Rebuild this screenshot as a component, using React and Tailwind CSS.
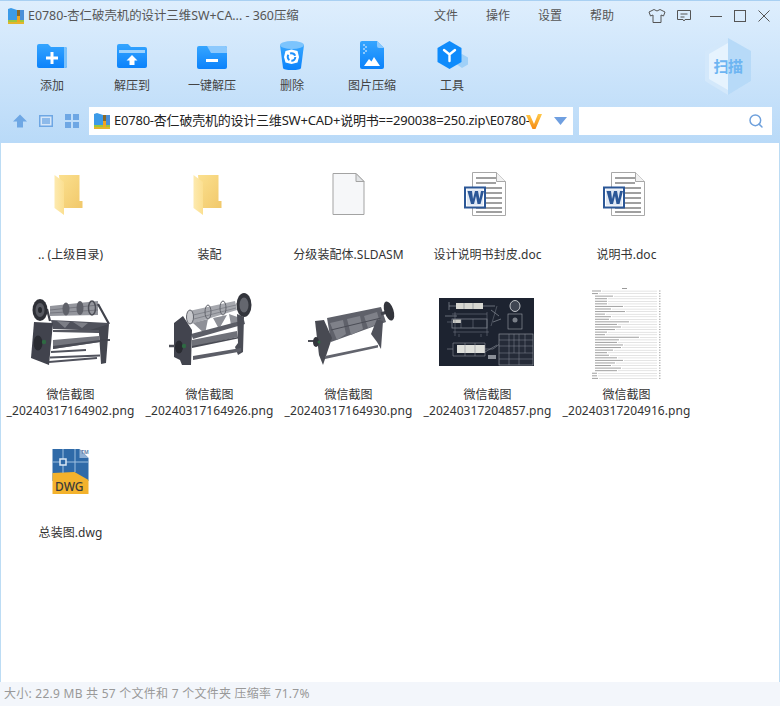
import { Search } from "lucide-react";

const toolbarItems = [
  { label: "添加", icon: AddIcon },
  { label: "解压到", icon: ExtractIcon },
  { label: "一键解压", icon: OneClickIcon },
  { label: "删除", icon: TrashIcon },
  { label: "图片压缩", icon: ImageIcon },
  { label: "工具", icon: ToolsIcon },
];

const menuItems = ["文件", "操作", "设置", "帮助"];

const files = [
  { lines: [".. (上级目录)"], icon: FolderIcon },
  { lines: ["装配"], icon: FolderIcon },
  { lines: ["分级装配体.SLDASM"], icon: BlankFileIcon },
  { lines: ["设计说明书封皮.doc"], icon: WordIcon },
  { lines: ["说明书.doc"], icon: WordIcon },
  { lines: ["微信截图", "_20240317164902.png"], icon: MachineFront },
  { lines: ["微信截图", "_20240317164926.png"], icon: MachineAngle },
  { lines: ["微信截图", "_20240317164930.png"], icon: MachineTop },
  { lines: ["微信截图", "_20240317204857.png"], icon: CadSheet },
  { lines: ["微信截图", "_20240317204916.png"], icon: TocPage },
  { lines: ["总装图.dwg"], icon: DwgIcon },
];

// widths of the contents-page entries, top to bottom
const tocEntries = [
  9, 6, 18, 12, 12, 12, 28, 16, 30, 10, 16, 14, 34, 22, 26, 20, 12, 10, 44, 24, 22, 28, 26, 18, 12, 14,
  22, 28, 20, 16, 26, 22, 5, 5, 6,
];

function AddIcon() {
  return (
    <svg width="32" height="32" viewBox="0 0 32 32">
      <defs>
        <linearGradient id="blueA" x1="0" y1="0" x2="0" y2="1">
          <stop offset="0" stopColor="#35a5ff" />
          <stop offset="1" stopColor="#0b82fb" />
        </linearGradient>
      </defs>
      <path d="M1 6a2 2 0 0 1 2-2h9l3 3h14a2 2 0 0 1 2 2v17a2 2 0 0 1-2 2H3a2 2 0 0 1-2-2z" fill="url(#blueA)" />
      <path d="M28 7h1a2 2 0 0 1 2 2v17a2 2 0 0 1-2 2h-1z" fill="#7cc2fb" />
      <path d="M14.500 12h3v4.500h4.500v3h-4.500v4.500h-3v-4.500H10v-3h4.500z" fill="#fff" />
    </svg>
  );
}

function ExtractIcon() {
  return (
    <svg width="32" height="32" viewBox="0 0 32 32">
      <defs>
        <linearGradient id="blueB" x1="0" y1="0" x2="0" y2="1">
          <stop offset="0" stopColor="#35a5ff" />
          <stop offset="1" stopColor="#0b82fb" />
        </linearGradient>
      </defs>
      <path d="M1 6a2 2 0 0 1 2-2h9l3 3h14a2 2 0 0 1 2 2v17a2 2 0 0 1-2 2H3a2 2 0 0 1-2-2z" fill="url(#blueB)" />
      <rect x="3" y="10" width="26" height="3" fill="#9dd2fd" />
      <path d="M16 15l5.500 5.500H18.500V25h-5v-4.500h-3z" fill="#fff" />
    </svg>
  );
}

function OneClickIcon() {
  return (
    <svg width="32" height="32" viewBox="0 0 32 32">
      <defs>
        <linearGradient id="blueC" x1="0" y1="0" x2="0" y2="1">
          <stop offset="0" stopColor="#35a5ff" />
          <stop offset="1" stopColor="#0b82fb" />
        </linearGradient>
      </defs>
      <rect x="1" y="6" width="30" height="23" rx="2" fill="url(#blueC)" />
      <path d="M11 6h18a2 2 0 0 1 2 2v5H15z" fill="#8cc9fd" />
      <rect x="10" y="19" width="12" height="3" fill="#fff" />
    </svg>
  );
}

function TrashIcon() {
  return (
    <svg width="32" height="32" viewBox="0 0 32 32">
      <defs>
        <linearGradient id="blueD" x1="0" y1="0" x2="0" y2="1">
          <stop offset="0" stopColor="#36a6ff" />
          <stop offset="1" stopColor="#0b82fb" />
        </linearGradient>
      </defs>
      <path d="M4 5l3 23q.5 2 9 2t9-2l3-23z" fill="url(#blueD)" />
      <ellipse cx="16" cy="5" rx="12" ry="4" fill="#7cc4fd" />
      <path d="M15.500 9.500l6 1.500 1.500 6-1.500 5.500-6 1.500-6-1.500L8 17l1.500-6z" fill="#fff" />
      <circle cx="15.500" cy="17" r="3.800" fill="none" stroke="#1e90fb" strokeWidth="2" strokeDasharray="6 2" />
    </svg>
  );
}

function ImageIcon() {
  return (
    <svg width="32" height="32" viewBox="0 0 32 32">
      <defs>
        <linearGradient id="blueE" x1="0" y1="0" x2="0" y2="1">
          <stop offset="0" stopColor="#35a5ff" />
          <stop offset="1" stopColor="#0b82fb" />
        </linearGradient>
      </defs>
      <path d="M4 3a2 2 0 0 1 2-2h15l7 7v19a2 2 0 0 1-2 2H6a2 2 0 0 1-2-2z" fill="url(#blueE)" />
      <path d="M21 1l7 7h-5a2 2 0 0 1-2-2z" fill="#8cc9fd" />
      <path d="M7 4h2v2H7zM9 6h2v2H9zM7 8h2v2H7zM9 10h2v2H9zM7 12h2v2H7z" fill="#8cc9fd" />
      <path d="M8 26l5-7 2.500 2.500L18 17l6 9z" fill="#fff" />
    </svg>
  );
}

function ToolsIcon() {
  return (
    <svg width="32" height="32" viewBox="0 0 32 32">
      <path d="M26 14l6 3.500v7L26 28l-5-3.500v-7z" fill="#9fd0f8" />
      <path d="M13.500 1l12 7v14l-12 7-12-7V8z" fill="#0f8bfb" />
      <path d="M8 10l5.500 4.500L19 10M13.500 14.500V21" fill="none" stroke="#fff" strokeWidth="2.400" strokeLinecap="round" />
    </svg>
  );
}

function ZipIcon() {
  return (
    <svg width="16" height="16" viewBox="0 0 16 16" className="shrink-0">
      <path d="M0 1l3-1 6 2v11H0z" fill="#3c9be8" />
      <rect x="9" y="2" width="3" height="11" fill="#8a6a2a" />
      <rect x="12" y="2" width="4" height="11" fill="#4a8fd8" />
      <rect x="0" y="12" width="16" height="2" fill="#9fc63c" />
      <rect x="0" y="14" width="16" height="2" fill="#e4b52c" />
      <rect x="9" y="8" width="3" height="6" fill="#f1a51f" />
    </svg>
  );
}

function VipMark() {
  return (
    <svg width="16" height="15" viewBox="0 0 16 15" className="shrink-0">
      <defs>
        <linearGradient id="vipV" x1="0" y1="0" x2="0" y2="1">
          <stop offset="0" stopColor="#ffc94a" />
          <stop offset="1" stopColor="#f58a12" />
        </linearGradient>
      </defs>
      <path d="M0 1h4l4 9 4-10h4L9.500 15h-3z" fill="url(#vipV)" />
    </svg>
  );
}

function FolderIcon() {
  return (
    <svg width="48" height="48" viewBox="0 0 48 48">
      <defs>
        <linearGradient id="folderBack" x1="0" y1="0" x2="1" y2="1">
          <stop offset="0" stopColor="#fbe08f" />
          <stop offset="1" stopColor="#f1c86a" />
        </linearGradient>
        <linearGradient id="folderFlap" x1="0" y1="0" x2="1" y2="0">
          <stop offset="0" stopColor="#fdeab0" />
          <stop offset="1" stopColor="#fbdf90" />
        </linearGradient>
      </defs>
      <path d="M12 4h20.500v26h3v7H15z" fill="url(#folderBack)" />
      <path d="M7.500 4l9.500 7v33l-9.500-7z" fill="url(#folderFlap)" />
    </svg>
  );
}

function BlankFileIcon() {
  return (
    <svg width="48" height="48" viewBox="0 0 48 48">
      <path d="M8 2.500h23l8 8v33H8z" fill="#f6f7f9" stroke="#a3a3a3" />
      <path d="M31 2.500v8h8z" fill="#e2e4e6" stroke="#a3a3a3" />
    </svg>
  );
}

function WordIcon() {
  return (
    <svg width="48" height="48" viewBox="0 0 48 48">
      <path d="M8.500 1.500h24l9 9v34h-33z" fill="#fff" stroke="#a8a8a8" />
      <path d="M32.500 1.500v9h9" fill="#f1f1f1" stroke="#a8a8a8" />
      <path d="M12 7h20M12 12h20M12 17h26M21 22h17M21 27h17M21 32h17M12 37h26M12 41h26" stroke="#a0a0a0" strokeWidth="2" />
      <rect x="1" y="16.500" width="20" height="20" fill="#fff" stroke="#2b5797" strokeWidth="2" />
      <rect x="3" y="18.500" width="16" height="16" fill="#dfe8f4" />
      <path d="M3.500 20h4.500l1 8 2-8h3l1.500 8 1.500-8h3l-3.500 13h-3l-1.500-8-2 8h-3z" fill="#2b5797" />
    </svg>
  );
}

function DwgIcon() {
  return (
    <svg width="48" height="48" viewBox="0 0 48 48">
      <path d="M5.500 0h27l9 9v23H5.500z" fill="#2f6aa8" />
      <path d="M32.500 0l9 9h-9z" fill="#8fb0d4" />
      <path d="M5.500 24l22-1 14 8v14h-36z" fill="#f3b22c" />
      <path d="M5.500 13h36M16 0v24M28 0v23" stroke="#9fc0e0" strokeWidth="1" fill="none" />
      <rect x="13" y="10" width="6" height="6" fill="#2f6aa8" stroke="#dbe8f4" strokeWidth="1.500" />
      <text x="8" y="42" fontSize="12" fontWeight="500" fill="#3a3a3a" fontFamily="'Noto Sans', sans-serif">
        DWG
      </text>
      <text x="34" y="5" fontSize="5" fontWeight="700" fill="#5f7fa8" fontFamily="'Noto Sans', sans-serif">
        TM
      </text>
    </svg>
  );
}

function MachineFront() {
  return (
    <svg width="100" height="92" viewBox="0 0 100 92" className="blur-[0.5px]">
      <g transform="translate(0 2)">
        <path d="M29 16l48-5v14l-48 1z" fill="#94969d" />
        <path d="M29 20l48-5M29 23l48-3" stroke="#6d6f77" strokeWidth="0.800" />
        <ellipse cx="45" cy="19" rx="3.500" ry="6.500" fill="#5f6169" />
        <ellipse cx="59" cy="18" rx="3.500" ry="7" fill="#5f6169" />
        <ellipse cx="71" cy="18" rx="3.500" ry="7" fill="none" stroke="#4d4f57" strokeWidth="1.500" />
        <path d="M77 14l11 20M26 19l3 12" stroke="#41434c" strokeWidth="2.200" fill="none" />
        <ellipse cx="19" cy="20" rx="7.500" ry="11" fill="#2e3037" />
        <ellipse cx="19" cy="20" rx="4.500" ry="7" fill="#585a62" />
        <ellipse cx="19" cy="20" rx="2" ry="3" fill="#26282e" />
        <path d="M30 30l58 3-3 8-53-2z" fill="#4f515b" />
        <path d="M36 31l13 1-5 6zM52 32l15 1-6 5z" fill="#7c7e86" />
        <path d="M13 32l19 1-4 42-18-7z" fill="#41434d" />
        <path d="M66 41l22-7-3 39-5 1-2-31z" fill="#44464f" />
        <path d="M32 40h46v3l-46-1z" fill="#54565f" />
        <path d="M32 50l46-4 1 6-47 7z" fill="#74767e" />
        <path d="M32 56l47-6v2L32 59z" fill="#4a4c55" />
        <path d="M79 50h10" stroke="#41434c" strokeWidth="1.800" />
        <ellipse cx="17" cy="53" rx="4.500" ry="7.500" fill="#282a30" />
        <circle cx="23" cy="52" r="2.200" fill="#2f6a43" />
        <path d="M30 62l35-2M29 67.500l50-2M28 72l48-4" stroke="#50525c" strokeWidth="2.200" />
      </g>
    </svg>
  );
}

function MachineAngle() {
  return (
    <svg width="100" height="92" viewBox="0 0 100 92" className="blur-[0.5px]">
      <g transform="translate(-1 -3)">
        <path d="M30 26l46-10 2 9-46 14z" fill="#a6a8ae" />
        <path d="M30 31l47-11M31 35l46-12" stroke="#7a7c84" strokeWidth="0.800" />
        <ellipse cx="31" cy="32" rx="3.500" ry="7" fill="#c8c9cd" stroke="#62646c" />
        <ellipse cx="49" cy="27" rx="3" ry="7" fill="none" stroke="#62646c" />
        <ellipse cx="64" cy="23" rx="3" ry="7" fill="none" stroke="#62646c" />
        <path d="M78 20l7-3" stroke="#4d4f57" strokeWidth="3" />
        <ellipse cx="85" cy="20" rx="7.500" ry="12" fill="#33353c" />
        <ellipse cx="85" cy="20" rx="4.500" ry="7.500" fill="#64666e" />
        <path d="M34 38l15-4-3 15zM54 33l14-3-8 14zM70 29l14 5-12 6z" fill="#8e9097" />
        <path d="M32 49l53-14 1 4-52 15z" fill="#5c5e67" />
        <path d="M15 38l9-7 9 14-1 35h-9l-2-5-6-3z" fill="#42444e" />
        <path d="M78 29l7 3-1 35-5 3-3-8 3-4z" fill="#4b4d56" />
        <path d="M33 55l45-9 1 6-46 10z" fill="#6f7179" />
        <path d="M33 61l46-9v1.500L33 63z" fill="#4a4c55" />
        <path d="M34 71l48-8v3.500l-48 8.500z" fill="#5c5e67" />
        <path d="M10 61h8" stroke="#4d4f57" strokeWidth="2.500" />
        <ellipse cx="20" cy="62" rx="4" ry="6.500" fill="#282a30" />
        <circle cx="25" cy="61" r="2.200" fill="#2f6a43" />
      </g>
    </svg>
  );
}

function MachineTop() {
  return (
    <svg width="100" height="92" viewBox="0 0 100 92" className="blur-[0.5px]">
      <g transform="translate(2 2)">
        <path d="M26 28l54-11 5 15-55 20z" fill="#5f616a" />
        <path d="M29 33l13-3 3 14-9 6zM46 29l13-3 3 13-12 6zM63 26l13-4 3 11-12 5z" fill="#7f8189" />
        <path d="M30 40l50-12" stroke="#4a4c55" strokeWidth="1" />
        <path d="M14 31l9-1 8 18-9 27-4-10z" fill="#484a52" />
        <path d="M76 29l6 2-2 28-4-7-6-8z" fill="#50525b" />
        <path d="M24 66l53-11v2.500l-53 11.500z" fill="#62646d" />
        <path d="M80 24l6-2" stroke="#41434c" strokeWidth="3" />
        <ellipse cx="88" cy="21" rx="4.500" ry="10" fill="#33353c" transform="rotate(-18 88 21)" />
        <path d="M7 51h8" stroke="#4d4f57" strokeWidth="2" />
        <ellipse cx="15" cy="52" rx="3" ry="5" fill="#33353c" />
        <circle cx="18" cy="52" r="1.500" fill="#2f6a43" />
      </g>
    </svg>
  );
}

function CadSheet() {
  return (
    <svg width="105" height="92" viewBox="0 0 105 92" className="blur-[0.3px]">
      <g transform="translate(0 4)">
        <rect x="4" y="6" width="95" height="68" fill="#1d2330" />
        <rect x="21" y="11" width="27" height="6" fill="#d8d8d2" />
        <path d="M29 11v6M38 11v6M14 14h7M48 14h12M14 10v8M10 24h12M56 18l8 6M58 30l8-3" stroke="#8a8f98" strokeWidth="0.700" />
        <rect x="17" y="27" width="35" height="9" fill="none" stroke="#8a8f98" strokeWidth="0.700" />
        <rect x="18" y="27.500" width="8" height="3.500" fill="#c9c9c4" />
        <path d="M26 27v9M38 27v9M17 22h35M18 40h36M20 20v24M52 20v24M62 14l-6 20M24 42v3M46 42v3M12 30h6" stroke="#7d828c" strokeWidth="0.500" />
        <ellipse cx="80" cy="14" rx="5" ry="5.500" fill="#3f4552" stroke="#bfc2c7" strokeWidth="1" />
        <rect x="73" y="22" width="14" height="15" fill="none" stroke="#9ca0a8" strokeWidth="0.600" />
        <circle cx="80" cy="28" r="2.500" fill="#7a7f88" />
        <rect x="22" y="53" width="28" height="8" fill="#dedfda" />
        <path d="M18 51h32v13H18zM30 51v13M40 51v13M12 57h6M50 57h8l8-6M50 60l12-7" stroke="#8a8f98" strokeWidth="0.600" fill="none" />
        <rect x="53" y="63" width="8" height="4" fill="#8a8f98" />
        <rect x="64" y="42" width="34" height="31" fill="#252b38" stroke="#9ca0a8" strokeWidth="0.600" />
        <path d="M64 61h34M74 42v31M84 42v31M90 42v19M64 48h34M64 54h34M64 67h34M79 42v19" stroke="#868b94" strokeWidth="0.500" />
      </g>
    </svg>
  );
}

function TocPage() {
  return (
    <svg width="74" height="92" viewBox="0 0 74 92" className="blur-[0.2px]">
      <rect x="32" y="0" width="5" height="1" fill="#9a9a9a" />
      {tocEntries.map((w, i) => {
        const y = 2.500 + i * 2.570;
        const indent = w > 8 && i > 1 ? 3 : 0;
        return (
          <g key={i}>
            <rect x={2 + indent} y={y} width={w} height="1" fill="#a0a0a0" />
            <rect x={3 + indent + w} y={y + 0.300} width={67 - (3 + indent + w)} height="0.600" fill="#d2d2d2" />
            <rect x="69" y={y} width="1.500" height="1" fill="#a9a9a9" />
          </g>
        );
      })}
    </svg>
  );
}

function FileCell({ lines, icon: Icon }) {
  return (
    <div className="flex h-[139px] flex-col items-center">
      <div className="flex h-[92px] w-full items-center justify-center">
        <Icon />
      </div>
      <div
        className={`text-center text-[12px] leading-[16px] tracking-[0.05px] whitespace-nowrap text-[#333] ${
          lines.length > 1 ? "mt-[7px]" : "mt-[6px]"
        }`}
      >
        {lines.map((line) => (
          <div key={line}>{line}</div>
        ))}
      </div>
    </div>
  );
}

export default function App() {
  return (
    <div className="flex h-[706px] w-[780px] flex-col overflow-hidden bg-white font-['Noto_Sans','Noto_Sans_CJK_SC',sans-serif]">
      <header className="flex h-[143px] shrink-0 flex-col border-t border-[#a9d0f2] bg-gradient-to-b from-[#deeefd] to-[#b9daf8]">
        {/* title bar */}
        <div className="flex h-[30px] items-center pl-[8px] text-[#555]">
          <ZipIcon />
          <span className="ml-[4px] text-[12.4px]">E0780-杏仁破壳机的设计三维SW+CA... - 360压缩</span>
          <nav className="ml-auto flex text-[12px]">
            {menuItems.map((item) => (
              <span key={item} className="w-[52px] text-center">
                {item}
              </span>
            ))}
          </nav>
          <div className="mr-[9px] ml-[20px] flex items-center text-[#555]">
            <svg width="18" height="16" viewBox="0 0 18 16" fill="none" stroke="currentColor">
              <path d="M6 1.500L1 4l1.500 4L5 7v7.500h8V7l2.500 1L17 4l-5-2.500q-3 3-6 0z" />
            </svg>
            <svg width="16" height="14" viewBox="0 0 16 14" fill="none" stroke="currentColor" className="ml-[10px]">
              <path d="M1.500 1.500h13v9H9l-1 1.500-1-1.500H1.500zM4.500 5h7M4.500 8h4" />
            </svg>
            <svg width="14" height="14" viewBox="0 0 14 14" stroke="currentColor" className="ml-[17px]">
              <path d="M1 7.500h12" />
            </svg>
            <svg width="14" height="14" viewBox="0 0 14 14" fill="none" stroke="currentColor" className="ml-[10px]">
              <rect x="1.500" y="1.500" width="11" height="11" />
            </svg>
            <svg width="14" height="14" viewBox="0 0 14 14" stroke="currentColor" className="ml-[10px]">
              <path d="M1.500 1.500l11 11M12.500 1.500l-11 11" />
            </svg>
          </div>
        </div>

        {/* toolbar */}
        <div className="flex h-[76px] items-start pt-[7px] pl-[12px]">
          {toolbarItems.map(({ label, icon: Icon }) => (
            <button key={label} className="mt-[2px] flex w-[80px] flex-col items-center text-[12px] leading-[16px] text-[#444]">
              <Icon />
              <span className="mt-[6px]">{label}</span>
            </button>
          ))}
          <div className="relative ml-auto mr-[29px] flex h-[57px] w-[46px] items-center justify-center">
            <svg width="46" height="57" viewBox="0 0 46 57" className="absolute inset-0">
              <path d="M23 0l23 13v30L23 57 0 43V13z" fill="#d3e8fb" />
              <path d="M23 0l23 13v30L23 57z" fill="#b7daf8" />
              <path d="M23 5L4 16v25l19 11z" fill="#e6f3fe" />
            </svg>
            <span className="relative text-[15px] font-bold tracking-[-0.5px] text-[#6db5f2]">扫描</span>
          </div>
        </div>

        {/* address row */}
        <div className="flex h-[28px] items-center pr-[8px] pl-[13px]">
          <svg width="14" height="14" viewBox="0 0 14 14" fill="#6ea7e4">
            <path d="M7 0.500l7 7H10v6H4v-6H0z" />
          </svg>
          <svg width="14" height="12" viewBox="0 0 14 12" fill="none" className="ml-[12px]">
            <rect x="0.750" y="0.750" width="12.500" height="10.500" stroke="#6ea7e4" strokeWidth="1.500" fill="#d5e6f8" />
            <rect x="3" y="3" width="8" height="6" fill="#8dbaea" />
          </svg>
          <svg width="14" height="14" viewBox="0 0 14 14" fill="#6ea7e4" className="ml-[12px]">
            <path d="M0 0h6v6H0zM8 0h6v6H8zM0 8h6v6H0zM8 8h6v6H8z" />
          </svg>
          <div className="ml-[10px] flex h-[28px] w-[484px] items-center bg-white pl-[5px]">
            <ZipIcon />
            <span className="ml-[4px] w-[412px] text-[13px] tracking-[-0.22px] whitespace-nowrap text-[#222]">
              E0780-杏仁破壳机的设计三维SW+CAD+说明书==290038=250.zip\E0780-
            </span>
            <VipMark />
            <svg width="13" height="8" viewBox="0 0 13 8" fill="#6f9fe0" className="ml-[12px]">
              <path d="M0 0h13L6.500 8z" />
            </svg>
          </div>
          <div className="ml-[6px] flex h-[28px] flex-1 items-center justify-end bg-white pr-[8px]">
            <Search size={16} strokeWidth={2.200} className="text-[#6ea0dc]" />
          </div>
        </div>
      </header>

      {/* file list */}
      <main className="flex-1 border-x border-[#bcdcf4] pt-[6px]">
        <div className="grid grid-cols-[repeat(5,139px)]">
          {files.map((file) => (
            <FileCell key={file.lines.join()} {...file} />
          ))}
        </div>
      </main>

      <footer className="flex h-[24px] shrink-0 items-center bg-[#f3f6fb] pl-[4px] text-[12px] tracking-[0.25px] text-[#999]">
        大小: 22.9 MB 共 57 个文件和 7 个文件夹 压缩率 71.7%
      </footer>
    </div>
  );
}
